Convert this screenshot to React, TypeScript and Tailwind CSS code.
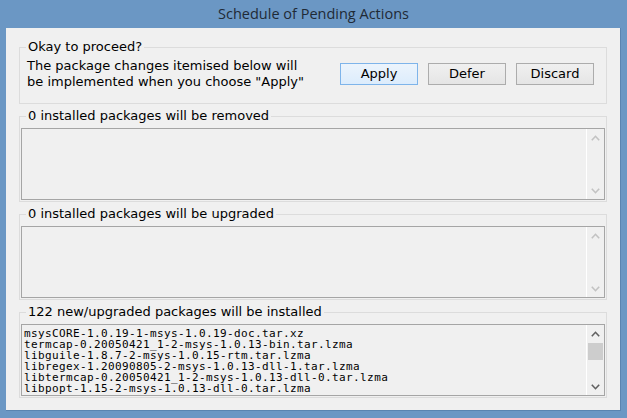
import React from 'react';

const UI_FONT = { fontFamily: '"DejaVu Sans", Verdana, sans-serif' };
const MONO_FONT = { fontFamily: '"DejaVu Sans Mono", "Liberation Mono", monospace' };

const INSTALLS = [
  'msysCORE-1.0.19-1-msys-1.0.19-doc.tar.xz',
  'termcap-0.20050421_1-2-msys-1.0.13-bin.tar.lzma',
  'libguile-1.8.7-2-msys-1.0.15-rtm.tar.lzma',
  'libregex-1.20090805-2-msys-1.0.13-dll-1.tar.lzma',
  'libtermcap-0.20050421_1-2-msys-1.0.13-dll-0.tar.lzma',
  'libpopt-1.15-2-msys-1.0.13-dll-0.tar.lzma',
];

const GROUPS = [
  { title: '0 installed packages will be removed', items: [] as string[] },
  { title: '0 installed packages will be upgraded', items: [] as string[] },
  { title: '122 new/upgraded packages will be installed', items: INSTALLS },
];

function Chevron({ up, enabled }: { up?: boolean; enabled: boolean }) {
  return (
    <svg width="9" height="6" viewBox="0 0 9 6" className={enabled ? 'text-[#606060]' : 'text-[#c2c2c2]'}>
      <polyline
        points={up ? '0.8,5.2 4.5,1.3 8.2,5.2' : '0.8,0.8 4.5,4.7 8.2,0.8'}
        fill="none"
        stroke="currentColor"
        strokeWidth="1.6"
      />
    </svg>
  );
}

function ListBox({ items }: { items: string[] }) {
  const enabled = items.length > 0;
  return (
    <div className="flex h-[72px] border border-[#a5a5a5] bg-[#f0f0f0]">
      <div
        className="min-w-0 flex-1 overflow-hidden pl-[2px] pt-[3px] text-[11px] leading-[11px] tracking-[0.38px] text-black"
        style={MONO_FONT}
      >
        {items.map((item) => (
          <div key={item} className="whitespace-nowrap">
            {item}
          </div>
        ))}
      </div>
      <div className="flex w-[18px] shrink-0 flex-col border-l border-white">
        <div className="flex h-[17px] items-center justify-center">
          <Chevron up enabled={enabled} />
        </div>
        {enabled && <div className="mx-[1px] mt-[1px] h-[17px] bg-[#cdcdcd]" />}
        <div className="flex-1" />
        <div className="flex h-[17px] items-center justify-center">
          <Chevron enabled={enabled} />
        </div>
      </div>
    </div>
  );
}

function Group({ title, children, className }: { title: string; children: React.ReactNode; className?: string }) {
  return (
    <fieldset className={`border border-[#dcdcdc] px-[1px] ${className ?? ''}`}>
      <legend className="ml-[5px] px-[2px] text-[13px] leading-[14px] text-black">{title}</legend>
      {children}
    </fieldset>
  );
}

export default function App() {
  return (
    <div className="flex h-[418px] w-[627px] flex-col bg-[#6b97c4]" style={UI_FONT}>
      <div
        className="flex h-[28px] items-center justify-center text-[14.5px] text-[#1f2a36]"
        style={{ fontFamily: '"Open Sans", "Noto Sans", sans-serif' }}
      >
        Schedule of Pending Actions
      </div>
      <div className="ml-[6px] flex h-[383px] w-[615px] flex-col border-b border-r border-[#5a84b0] bg-[#f0f0f0] px-[13px] pt-[12px]">
        <Group title="Okay to proceed?" className="pb-[13px] pt-[4px]">
          <div className="flex items-center justify-between pl-[6px] pr-[11px]">
            <div className="text-[13px] leading-[16px] text-black">
              <div>The package changes itemised below will</div>
              <div>be implemented when you choose "Apply"</div>
            </div>
            <div className="flex gap-[10px] text-[13px] text-black">
              <button className="h-[22px] w-[78px] border border-[#7eb4ea] bg-gradient-to-b from-[#ecf4fc] to-[#dcecfc]">
                Apply
              </button>
              <button className="h-[22px] w-[78px] border border-[#acacac] bg-gradient-to-b from-[#f0f0f0] to-[#e5e5e5]">
                Defer
              </button>
              <button className="h-[22px] w-[78px] border border-[#acacac] bg-gradient-to-b from-[#f0f0f0] to-[#e5e5e5]">
                Discard
              </button>
            </div>
          </div>
        </Group>
        {GROUPS.map((group) => (
          <Group key={group.title} title={group.title} className="mt-[5px] pb-[1px] pt-[5px]">
            <ListBox items={group.items} />
          </Group>
        ))}
      </div>
    </div>
  );
}
